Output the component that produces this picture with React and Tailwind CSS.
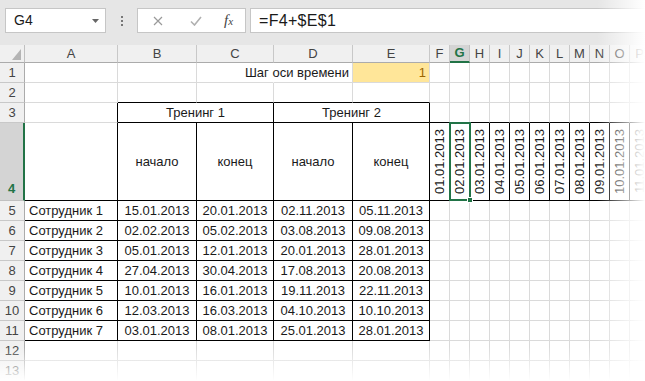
import React from 'react';

const widths = [93, 79, 77, 79, 77, 20, 20, 20, 20, 20, 20, 20, 20, 20, 20, 20];
const letters = ['A', 'B', 'C', 'D', 'E', 'F', 'G', 'H', 'I', 'J', 'K', 'L', 'M', 'N', 'O', 'P'];

const data = [
  ['Сотрудник 1', '15.01.2013', '20.01.2013', '02.11.2013', '05.11.2013'],
  ['Сотрудник 2', '02.02.2013', '05.02.2013', '03.08.2013', '09.08.2013'],
  ['Сотрудник 3', '05.01.2013', '12.01.2013', '20.01.2013', '28.01.2013'],
  ['Сотрудник 4', '27.04.2013', '30.04.2013', '17.08.2013', '20.08.2013'],
  ['Сотрудник 5', '10.01.2013', '16.01.2013', '19.11.2013', '22.11.2013'],
  ['Сотрудник 6', '12.03.2013', '16.03.2013', '04.10.2013', '10.10.2013'],
  ['Сотрудник 7', '03.01.2013', '08.01.2013', '25.01.2013', '28.01.2013'],
];

// cells that carry the thin black table border
const boxed = (r, c) =>
  (r >= 3 && r <= 11 && c >= 1 && c <= 4) ||
  (r >= 5 && r <= 11 && c === 0) ||
  (r === 4 && c >= 5);

function Cell({ r, c }) {
  if (r === 3 && (c === 2 || c === 4)) return null;
  const span = r === 3 && (c === 1 || c === 3);
  const cEnd = span ? c + 1 : c;
  const right = boxed(r, cEnd) || boxed(r, cEnd + 1);
  const bottom = boxed(r, c) || boxed(r + 1, c);
  let rightCls = right ? 'border-r-black' : 'border-r-[#dadada]';
  if (r === 1 && c === 2) rightCls = 'border-r-white';
  const bottomCls = bottom ? 'border-b-black' : 'border-b-[#dadada]';
  let body = null;
  let extra = 'justify-center';
  let bg = 'bg-white';

  if (r === 1 && c === 3) {
    extra = 'justify-end pr-[3px]';
    body = <span className="whitespace-nowrap">Шаг оси времени</span>;
  } else if (r === 1 && c === 4) {
    extra = 'justify-end pr-[3px] text-[#9c6500]';
    bg = 'bg-[#ffe699]';
    body = '1';
  } else if (r === 3 && c === 1) {
    body = 'Тренинг 1';
  } else if (r === 3 && c === 3) {
    body = 'Тренинг 2';
  } else if (r === 4 && c >= 1 && c <= 4) {
    body = c % 2 ? 'начало' : 'конец';
  } else if (r === 4 && c >= 5) {
    const d = String(c - 4).padStart(2, '0');
    body = <span className="[writing-mode:vertical-rl] rotate-180 whitespace-nowrap leading-none">{d}.01.2013</span>;
  } else if (r >= 5 && r <= 11 && c <= 4) {
    body = data[r - 5][c];
    if (c === 0) extra = 'justify-start pl-[4px]';
  }

  return (
    <div className={`${span ? 'col-span-2' : ''} ${bg} ${extra} ${rightCls} ${bottomCls} relative flex items-center border-r border-b overflow-visible`}>
      {body}
      {r === 4 && c === 6 && (
        <div className="absolute -left-[1px] -top-[1px] w-[22px] h-[79px] border-2 border-[#217346] z-10">
          <div className="absolute -right-[4px] -bottom-[4px] w-[6px] h-[6px] bg-[#217346] border border-white" />
        </div>
      )}
    </div>
  );
}

export default function App() {
  const rows = Array.from({ length: 13 }, (_, i) => i + 1);
  return (
    <div className="relative w-[645px] h-[381px] overflow-hidden bg-white font-['Liberation_Sans',Arial,sans-serif] text-[13px] text-[#1a1a1a]">
      <div className="h-[45px] bg-[#e6e6e6] flex items-start pt-[8px]">
        <div className="ml-[5px] w-[101px] h-[25px] bg-white border border-[#c6c6c6] flex items-center justify-between pl-[8px] pr-[6px] text-[14px]">
          <span>G4</span>
          <svg width="7" height="4" viewBox="0 0 7 4"><path d="M0 0h7L3.5 4z" fill="#666" /></svg>
        </div>
        <div className="w-[31px] h-[25px] flex flex-col items-center justify-center gap-[2px]">
          <span className="w-[2px] h-[2px] bg-[#777]" />
          <span className="w-[2px] h-[2px] bg-[#777]" />
          <span className="w-[2px] h-[2px] bg-[#777]" />
        </div>
        <div className="w-[109px] h-[25px] bg-white border border-[#c6c6c6] flex items-center">
          <svg className="ml-[15px]" width="10" height="10" viewBox="0 0 10 10"><path d="M1 1l8 8M9 1l-8 8" stroke="#9a9a9a" strokeWidth="1.2" /></svg>
          <svg className="ml-[27px]" width="12" height="10" viewBox="0 0 12 10"><path d="M1 5.5l3.5 3.5L11 1" stroke="#b0b0b0" strokeWidth="1.6" fill="none" /></svg>
          <span className="ml-[22px] italic font-['Liberation_Serif',serif] text-[15px] text-[#444] leading-none">f<span className="text-[11px]">x</span></span>
        </div>
        <div className="ml-[4px] flex-1 h-[25px] bg-white border border-[#c6c6c6] border-r-0 flex items-center pl-[8px] text-[16px] tracking-[0.3px]">
          =F4+$E$1
        </div>
      </div>

      <div className="grid grid-cols-[25px_93px_79px_77px_79px_77px_repeat(11,20px)] grid-rows-[18px_20px_20px_20px_78px_repeat(9,20px)]">
        <div className="bg-[#f0f0f0] border-r border-b border-r-[#c0c0c0] border-b-[#ababab] flex items-end justify-end pr-[3px] pb-[2px]">
          <svg width="9" height="11" viewBox="0 0 9 11"><path d="M9 0v11H0z" fill="#b4b4b4" /></svg>
        </div>
        {letters.map((l, i) => (
          <div
            key={l}
            className={
              i === 6
                ? 'bg-[#d4d4d4] border-r border-r-[#c0c0c0] border-b-2 border-b-[#217346] flex items-center justify-center text-[13px] font-bold text-[#217346]'
                : 'bg-[#f0f0f0] border-r border-b border-r-[#c8c8c8] border-b-[#ababab] flex items-center justify-center text-[13px] text-[#444]'
            }
          >
            {l}
          </div>
        ))}
        {rows.map((r) => (
          <React.Fragment key={r}>
            <div
              className={
                r === 4
                  ? 'bg-[#d4d4d4] border-r-2 border-b border-r-[#217346] border-b-[#c0c0c0] flex items-end justify-center pb-[2px] text-[13px] font-bold text-[#217346]'
                  : 'bg-[#f0f0f0] border-r border-b border-r-[#ababab] border-b-[#c8c8c8] flex items-center justify-center text-[13px] text-[#444]'
              }
            >
              {r}
            </div>
            {widths.map((_, c) => (
              <Cell key={c} r={r} c={c} />
            ))}
          </React.Fragment>
        ))}
      </div>

      <div className="absolute inset-y-0 right-0 w-[48px] bg-linear-to-r from-transparent to-white z-20" />
      <div className="absolute inset-x-0 bottom-0 h-[34px] bg-linear-to-b from-transparent to-white z-20" />
    </div>
  );
}
